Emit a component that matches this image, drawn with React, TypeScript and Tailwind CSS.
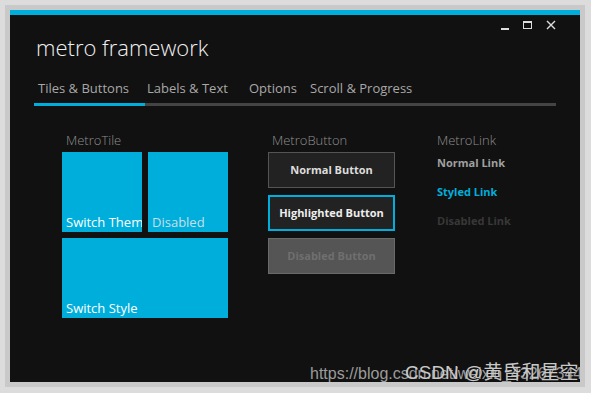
import React from 'react';

const font = { fontFamily: '"Open Sans", "Noto Sans", sans-serif' };

const tabs = ['Tiles & Buttons', 'Labels & Text', 'Options', 'Scroll & Progress'];

export default function App() {
    return (
        <div className="w-[591px] h-[393px] bg-[#dcdcdc] p-[5px] overflow-hidden" style={font}>
            <div className="w-[580px] h-[382px] bg-[#c9c9c9] p-[5px]">
                <div className="relative w-[570px] h-[372px] bg-[#111111] border-t-[5px] border-[#00aedb] overflow-hidden">
                    {/* window controls */}
                    <div className="flex justify-end items-center gap-[14px] pr-[24px] pt-[3px] h-[17px] text-[#dddddd]">
                        <div className="w-[8px] h-[2px] bg-[#dddddd] mt-[7px]" />
                        <div className="w-[9px] h-[8px] border-[1.5px] border-[#dddddd] border-t-[2px]" />
                        <svg width="10" height="10" viewBox="0 0 10 10">
                            <path d="M1 1 L9 9 M9 1 L1 9" stroke="#dddddd" strokeWidth="1.4" />
                        </svg>
                    </div>

                    {/* title */}
                    <h1 className="pl-[26px] text-[22px] leading-[30px] font-light text-[#f0f0f0]">metro framework</h1>

                    {/* tabs */}
                    <div className="ml-[24px] mr-[24px] mt-[16px]">
                        <div className="flex text-[13px] text-[#a8a8a8] h-[22px] items-center">
                            {tabs.map((t, i) => (
                                <span key={t} className={i === 0 ? 'pl-[4px] w-[111px]' : i === 1 ? 'pl-[2px] w-[101px]' : i === 2 ? 'pl-[3px] w-[63px]' : 'pl-[1px]'}>
                                    {t}
                                </span>
                            ))}
                        </div>
                        <div className="flex h-[3px] mt-[3px] bg-[#444444]">
                            <div className="w-[111px] bg-[#00aedb]" />
                        </div>
                    </div>

                    {/* content */}
                    <div className="flex pl-[52px] mt-[26px]">
                        <div className="w-[166px]">
                            <div className="ml-[4px] text-[13px] leading-[16px] text-[#8f8f8f] font-light">MetroTile</div>
                            <div className="grid grid-cols-2 gap-[6px] mt-[4px]">
                                <div className="h-[80px] bg-[#00aedb] flex items-end overflow-hidden pl-[4px] pb-[1px]">
                                    <span className="text-[13px] leading-[18px] text-white whitespace-nowrap">Switch Theme</span>
                                </div>
                                <div className="h-[80px] bg-[#00aedb] flex items-end overflow-hidden pl-[4px] pb-[1px]">
                                    <span className="text-[13px] leading-[18px] text-[#c9dfe8] whitespace-nowrap">Disabled</span>
                                </div>
                                <div className="col-span-2 h-[80px] bg-[#00aedb] flex items-end overflow-hidden pl-[4px] pb-[1px]">
                                    <span className="text-[13px] leading-[18px] text-white whitespace-nowrap">Switch Style</span>
                                </div>
                            </div>
                        </div>

                        <div className="w-[127px] ml-[40px]">
                            <div className="ml-[4px] text-[13px] leading-[16px] text-[#8f8f8f] font-light">MetroButton</div>
                            <div className="flex flex-col gap-[7px] mt-[4px]">
                                <div className="h-[36px] border border-[#555555] bg-[#222222] flex items-center justify-center text-[11px] font-bold text-[#dddddd]">
                                    Normal Button
                                </div>
                                <div className="h-[36px] border-2 border-[#00aedb] bg-[#222222] flex items-center justify-center text-[11px] font-bold text-[#eeeeee]">
                                    Highlighted Button
                                </div>
                                <div className="h-[36px] border border-[#6a6a6a] bg-[#555555] flex items-center justify-center text-[11px] font-bold text-[#6f6f6f]">
                                    Disabled Button
                                </div>
                            </div>
                        </div>

                        <div className="ml-[42px]">
                            <div className="text-[13px] leading-[16px] text-[#8f8f8f] font-light">MetroLink</div>
                            <div className="flex flex-col gap-[13px] mt-[7px] text-[11px] leading-[16px] font-bold">
                                <span className="text-[#a0a0a0]">Normal Link</span>
                                <span className="text-[#00aedb]">Styled Link</span>
                                <span className="text-[#383838]">Disabled Link</span>
                            </div>
                        </div>
                    </div>

                    {/* watermark overlay */}
                    <div className="absolute left-[300px] bottom-[-4px] whitespace-nowrap text-[16px] text-[#9c9c9c]" style={{ fontFamily: '"Liberation Sans", Arial, sans-serif' }}>
                        https://blog.csdn.net/weixin_43267344
                    </div>
                    <div className="absolute left-[395px] bottom-[-5px] whitespace-nowrap text-[19px] text-[#c8c8c8]" style={{ fontFamily: '"Liberation Sans", "Noto Sans CJK SC", sans-serif' }}>
                        CSDN @黄昏和星空
                    </div>
                </div>
            </div>
        </div>
    );
}
